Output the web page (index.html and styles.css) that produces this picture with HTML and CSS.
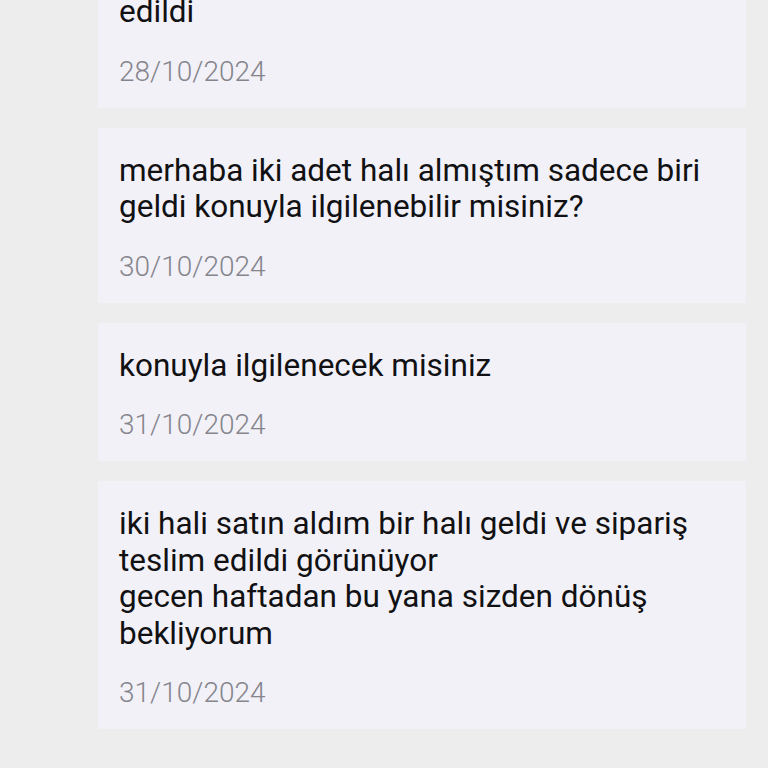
FILE: index.html
```html
<!DOCTYPE html>
<html lang="tr">
<head>
<meta charset="utf-8">
<link rel="stylesheet" href="styles.css">
</head>
<body>
<div class="list">
  <div class="card">
    <div class="msg">edildi</div>
    <div class="date">28/10/2024</div>
  </div>
  <div class="card">
    <div class="msg">merhaba iki adet halı almıştım sadece biri geldi konuyla ilgilenebilir misiniz?</div>
    <div class="date">30/10/2024</div>
  </div>
  <div class="card">
    <div class="msg">konuyla ilgilenecek misiniz</div>
    <div class="date">31/10/2024</div>
  </div>
  <div class="card">
    <div class="msg">iki hali satın aldım bir halı geldi ve sipariş teslim edildi görünüyor<br>gecen haftadan bu yana sizden dönüş bekliyorum</div>
    <div class="date">31/10/2024</div>
  </div>
</div>
</body>
</html>
```

FILE: styles.css
```css
html, body {
  margin: 0;
  padding: 0;
  background: #ededed;
  height: 100%;
  overflow: hidden;
}
body {
  font-family: Roboto, "Noto Sans", sans-serif;
}
.list {
  display: flex;
  flex-direction: column;
  gap: 20px;
  margin: -31px 22px 0 98px;
}
.card {
  background: #f2f1f8;
  padding: 25px 21px 18px 21px;
  display: flex;
  flex-direction: column;
  gap: 23px;
}
.msg {
  font-size: 31.5px;
  line-height: 36.5px;
  color: #111113;
}
.date {
  font-size: 28px;
  font-weight: 300;
  line-height: 36px;
  color: #86858c;
}
```
